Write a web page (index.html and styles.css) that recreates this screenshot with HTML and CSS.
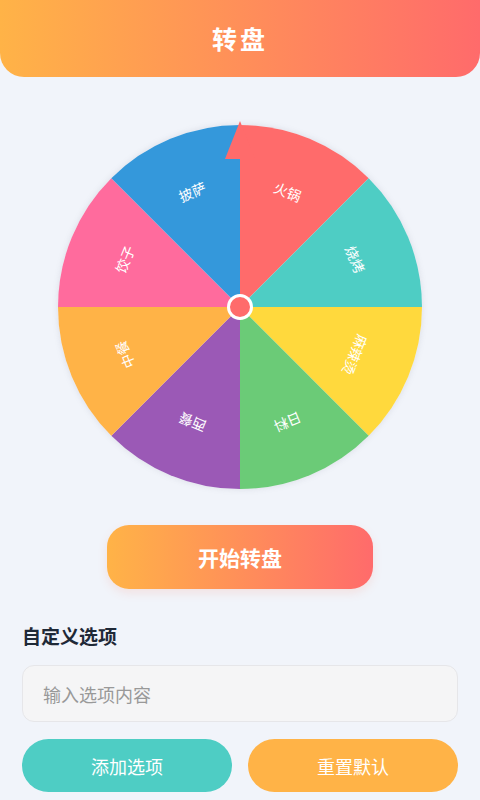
FILE: index.html
```html
<!DOCTYPE html>
<html lang="zh-CN">
<head>
<meta charset="utf-8">
<title>转盘</title>
<link rel="stylesheet" href="styles.css">
</head>
<body>
<header class="header"><h1 class="title">转盘</h1></header>
<main class="main">
  <div class="wheel-wrap">
    <svg class="wheel" width="364" height="364" viewBox="0 0 364 364">
      <path d="M182 182 L182 0 A182 182 0 0 1 310.69 53.31 Z" fill="#FF6B6B"/>
      <path d="M182 182 L310.69 53.31 A182 182 0 0 1 364 182 Z" fill="#4ECDC4"/>
      <path d="M182 182 L364 182 A182 182 0 0 1 310.69 310.69 Z" fill="#FFD93D"/>
      <path d="M182 182 L310.69 310.69 A182 182 0 0 1 182 364 Z" fill="#6BCB77"/>
      <path d="M182 182 L182 364 A182 182 0 0 1 53.31 310.69 Z" fill="#9B59B6"/>
      <path d="M182 182 L53.31 310.69 A182 182 0 0 1 0 182 Z" fill="#FFB347"/>
      <path d="M182 182 L0 182 A182 182 0 0 1 53.31 53.31 Z" fill="#FF6B9D"/>
      <path d="M182 182 L53.31 53.31 A182 182 0 0 1 182 0 Z" fill="#3498DB"/>
      <g class="labels">
        <text transform="translate(229.84 66.51) rotate(22.5)">火锅</text>
        <text transform="translate(297.49 134.16) rotate(67.5)">烧烤</text>
        <text transform="translate(297.49 229.84) rotate(112.5)">麻辣烫</text>
        <text transform="translate(229.84 297.49) rotate(157.5)">日料</text>
        <text transform="translate(134.16 297.49) rotate(202.5)">西餐</text>
        <text transform="translate(66.51 229.84) rotate(247.5)">中餐</text>
        <text transform="translate(66.51 134.16) rotate(292.5)">饺子</text>
        <text transform="translate(134.16 66.51) rotate(337.5)">披萨</text>
      </g>
      <polygon points="182,-4 167,34 197,34" fill="#FF6B6B"/>
      <circle cx="182" cy="182" r="11.5" fill="#FF6B6B" stroke="#ffffff" stroke-width="3"/>
    </svg>
  </div>
  <button class="spin-btn">开始转盘</button>
  <section class="custom">
    <h2 class="section-title">自定义选项</h2>
    <input class="option-input" type="text" placeholder="输入选项内容">
    <div class="actions">
      <button class="action add">添加选项</button>
      <button class="action reset">重置默认</button>
    </div>
  </section>
</main>
</body>
</html>
```

FILE: styles.css
```css
* { box-sizing: border-box; }
html, body { margin: 0; padding: 0; }
body {
  background: #f1f4fa;
  font-family: "Noto Sans CJK SC", "Noto Sans", sans-serif;
  width: 480px;
  height: 800px;
  overflow: hidden;
}
.header {
  height: 77px;
  background: linear-gradient(90deg, #FFB347 0%, #FF6B6B 100%);
  border-radius: 0 0 24px 24px;
  display: flex;
  align-items: center;
  justify-content: center;
}
.title {
  margin: 0;
  color: #fff;
  font-size: 25px;
  font-weight: 700;
  letter-spacing: 3px;
  line-height: 1;
}
.main {
  padding: 0 22px;
  display: flex;
  flex-direction: column;
  align-items: center;
}
.wheel-wrap {
  margin-top: 48px;
  width: 364px;
  height: 364px;
  border-radius: 50%;
  box-shadow: 0 0 6px rgba(120, 120, 140, 0.18);
}
.wheel { display: block; overflow: visible; }
.labels text {
  fill: #ffffff;
  font-size: 14px;
  text-anchor: middle;
  dominant-baseline: central;
  font-family: "Noto Sans CJK SC", sans-serif;
}
.spin-btn {
  margin-top: 36px;
  width: 266px;
  height: 64px;
  border: none;
  border-radius: 22px;
  background: linear-gradient(90deg, #FFB347 0%, #FF6B6B 100%);
  color: #fff;
  font-family: inherit;
  font-size: 21px;
  font-weight: 700;
  box-shadow: 0 4px 10px rgba(255, 120, 90, 0.15);
}
.custom {
  align-self: stretch;
  margin-top: 33px;
  display: flex;
  flex-direction: column;
}
.section-title {
  margin: 0;
  font-size: 19px;
  line-height: 28px;
  font-weight: 700;
  color: #1f2937;
}
.option-input {
  margin-top: 15px;
  height: 57px;
  border: 1px solid #e6e6e9;
  border-radius: 12px;
  background: #f5f5f6;
  padding: 0 20px;
  font-family: inherit;
  font-size: 18px;
  color: #333;
}
.option-input::placeholder { color: #999; }
.actions {
  margin-top: 17px;
  display: flex;
  gap: 16px;
}
.action {
  flex: 1;
  height: 53px;
  border: none;
  border-radius: 27px;
  color: #fff;
  font-family: inherit;
  font-size: 18px;
}
.add { background: #4ECDC4; }
.reset { background: #FFB347; }
```
